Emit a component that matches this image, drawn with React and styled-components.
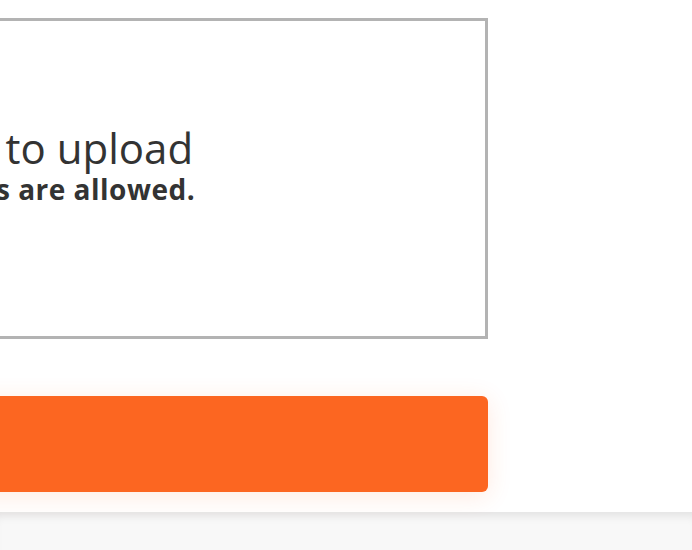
import styled, { createGlobalStyle } from "styled-components";

const GlobalStyle = createGlobalStyle`
  html, body {
    margin: 0;
    padding: 0;
    background: #ffffff;
    overflow-x: hidden;
  }
  body {
    font-family: "Open Sans", "Noto Sans", sans-serif;
    color: #333333;
  }
`;

function App() {
  return (
    <>
      <GlobalStyle />
      <Page>
        <Column>
          <DropZone>
            <DropTitle>Drag &amp; drop or click to upload</DropTitle>
            <DropHint>Only PDF, DOC or DOCX files are allowed.</DropHint>
          </DropZone>
          <UploadButton type="button">Upload</UploadButton>
        </Column>
      </Page>
      <Footer />
    </>
  );
}

const Page = styled.main`
  padding-top: 18px;
  padding-bottom: 20px;
`;

const Column = styled.div`
  width: 1176px;
  margin-left: -688px;
  display: flex;
  flex-direction: column;
  gap: 57px;
`;

const DropZone = styled.div`
  box-sizing: border-box;
  height: 321px;
  border: 3px solid #b3b3b3;
  background: #ffffff;
  padding-top: 105px;
  display: flex;
  flex-direction: column;
  align-items: center;
  gap: 4px;
  cursor: pointer;
`;

const DropTitle = styled.div`
  font-size: 42px;
  line-height: 44px;
  font-weight: 400;
  color: #333333;
  white-space: nowrap;
`;

const DropHint = styled.div`
  font-size: 28px;
  line-height: 30px;
  font-weight: 700;
  letter-spacing: 0.5px;
  color: #333333;
  white-space: nowrap;
`;

const UploadButton = styled.button`
  height: 96px;
  border: none;
  border-radius: 6px;
  background: #fc6621;
  color: #ffffff;
  font-family: "Open Sans", sans-serif;
  font-size: 24px;
  font-weight: 700;
  box-shadow: 0 4px 24px rgba(252, 102, 33, 0.14);
  cursor: pointer;
`;

const Footer = styled.footer`
  height: 60px;
  background: #f8f8f8;
  box-shadow: inset 0 10px 10px -6px rgba(0, 0, 0, 0.09);
`;

export default App;
